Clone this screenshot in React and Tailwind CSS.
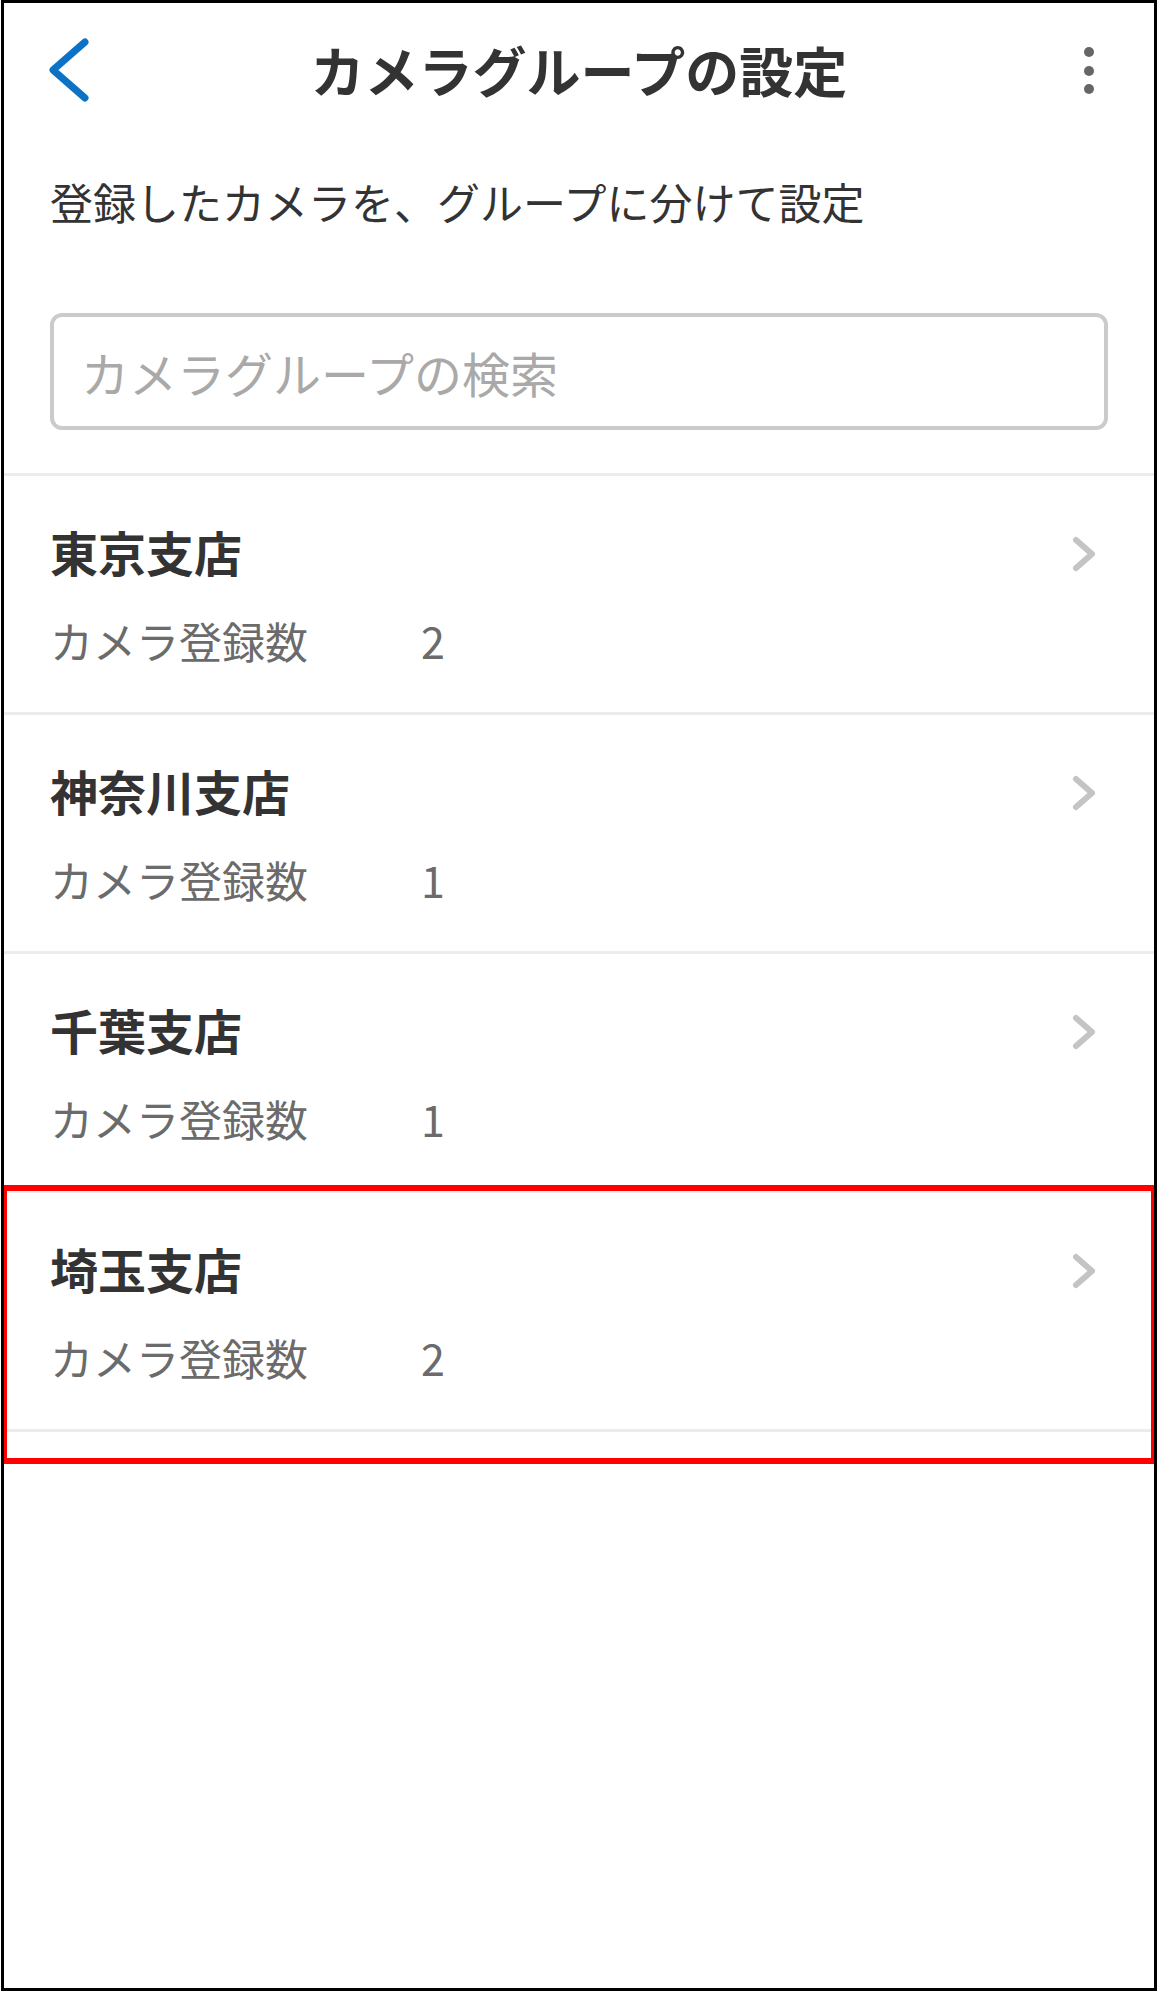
import React from 'react'

const groups = [
  { name: '東京支店', count: 2 },
  { name: '神奈川支店', count: 1 },
  { name: '千葉支店', count: 1 },
  { name: '埼玉支店', count: 2, highlighted: true },
]

function BackIcon() {
  return (
    <svg width="48" height="74" viewBox="0 0 48 74" fill="none">
      <path d="M40 9 L8 37 L40 65" stroke="#0b72c6" strokeWidth="7" strokeLinecap="round" strokeLinejoin="round" />
    </svg>
  )
}

function MoreIcon() {
  return (
    <svg width="12" height="50" viewBox="0 0 12 50">
      <circle cx="6" cy="6" r="5" fill="#666" />
      <circle cx="6" cy="25" r="5" fill="#666" />
      <circle cx="6" cy="43" r="5" fill="#666" />
    </svg>
  )
}

function ChevronRight() {
  return (
    <svg width="24" height="36" viewBox="0 0 24 36" fill="none">
      <path d="M4 4 L20 18 L4 32" stroke="#c4c4c4" strokeWidth="6" strokeLinecap="round" strokeLinejoin="round" />
    </svg>
  )
}

function GroupRow({ group }) {
  return (
    <div className="border-b-[3px] border-[#ececec] px-[46px] pt-[39px] pb-[40px]">
      <div className="flex items-center">
        <h3 className="text-[48px] leading-[72px] font-bold text-[#333]">{group.name}</h3>
        <div className="ml-auto mr-[12px] mt-[6px]">
          <ChevronRight />
        </div>
      </div>
      <div className="mt-[22px] flex items-center text-[43px] leading-[63px] text-[#6b6b6b]">
        <span className="w-[371px]">カメラ登録数</span>
        <span>{group.count}</span>
      </div>
    </div>
  )
}

export default function App() {
  return (
    <div
      className="ml-px w-[1156px] h-[1991px] border-[3px] border-black bg-white overflow-hidden"
      style={{ fontFamily: '"Noto Sans CJK JP", "Noto Sans", sans-serif' }}
    >
      {/* Header */}
      <div className="grid grid-cols-[120px_1fr_120px] items-center h-[134px]">
        <div className="ml-[41px] flex">
          <BackIcon />
        </div>
        <h1 className="text-center text-[54px] leading-none font-bold text-[#333]">カメラグループの設定</h1>
        <div className="ml-[49px] mt-[2px] flex">
          <MoreIcon />
        </div>
      </div>

      <div className="px-[46px]">
        <p className="mt-[33px] text-[43px] leading-[63px] text-[#333]">登録したカメラを、グループに分けて設定</p>

        <div className="mt-[80px] h-[117px] rounded-[12px] border-[4px] border-[#cbcbcb] flex items-center pl-[27px]">
          <span className="text-[48px] leading-none text-[#a9a9a9]">カメラグループの検索</span>
        </div>
      </div>

      {/* Group list */}
      <div className="mt-[43px] border-t-[3px] border-[#ececec]">
        {groups.map((g) =>
          g.highlighted ? (
            <div key={g.name} className="relative">
              <GroupRow group={g} />
              <div className="absolute -top-[8px] -bottom-[32px] -left-[3px] -right-[3px] border-[6px] border-[#ff0000] pointer-events-none" />
            </div>
          ) : (
            <GroupRow key={g.name} group={g} />
          )
        )}
      </div>
    </div>
  )
}
